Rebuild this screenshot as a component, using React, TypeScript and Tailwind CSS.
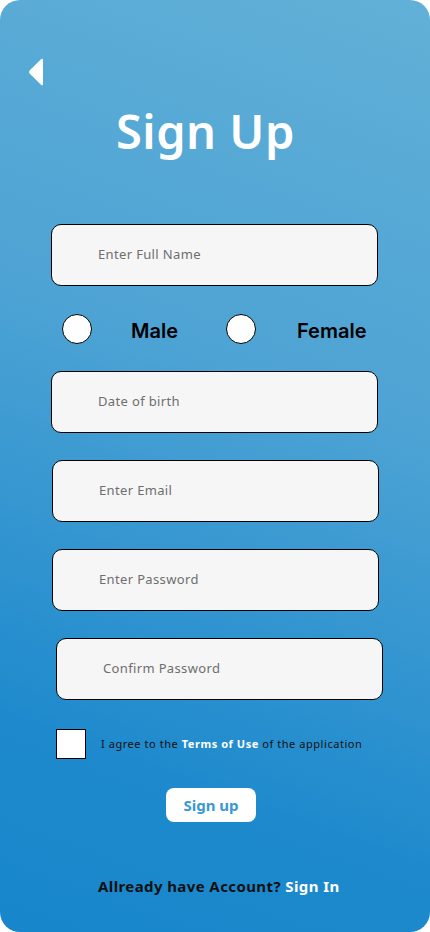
import React from "react"

function Field({ placeholder, className }: { placeholder: string; className: string }) {
    return (
        <div className={`h-[62px] w-[327px] rounded-[10px] border border-black bg-[#f6f6f6] flex items-center ${className}`}>
            <span className="pl-[46px] text-[13px] text-[#6e6e6e] tracking-[0.35px]">{placeholder}</span>
        </div>
    )
}

export default function App() {
    return (
        <div className="w-[430px] h-[932px] bg-white" style={{ fontFamily: "'Noto Sans', sans-serif" }}>
            <div className="relative w-full h-full rounded-[20px] bg-[linear-gradient(200deg,#61b0d7_0%,#4da3d4_40%,#1e8acd_80%,#1886cb_100%)] flex flex-col">
                {/* back */}
                <div className="pl-[28px] pt-[58px]">
                    <svg width="16" height="28" viewBox="0 0 16 28">
                        <path d="M15 2 C15 0.6 14 0.2 13 1.2 L1.6 12.6 C0.8 13.4 0.8 14.6 1.6 15.4 L13 26.8 C14 27.8 15 27.4 15 26 Z" fill="#fff" />
                    </svg>
                </div>

                <h1 className="ml-[116px] mt-[22px] text-[47px] leading-none font-semibold text-white tracking-[0.5px]">
                    Sign Up
                </h1>

                <Field placeholder="Enter Full Name" className="ml-[51px] mt-[69px]" />

                <div className="mt-[28px] flex items-center h-[30px]" style={{ fontFamily: "Inter, sans-serif" }}>
                    <div className="ml-[62px] w-[30px] h-[30px] rounded-full bg-white border border-black" />
                    <span className="ml-[39px] mt-[3px] text-[20px] font-semibold text-black">Male</span>
                    <div className="ml-[48px] w-[30px] h-[30px] rounded-full bg-white border border-black" />
                    <span className="ml-[41px] mt-[3px] text-[20px] font-semibold text-black">Female</span>
                </div>

                <Field placeholder="Date of birth" className="ml-[51px] mt-[27px]" />
                <Field placeholder="Enter Email" className="ml-[52px] mt-[27px]" />
                <Field placeholder="Enter Password" className="ml-[52px] mt-[27px]" />
                <Field placeholder="Confirm Password" className="ml-[56px] mt-[27px]" />

                <div className="mt-[29px] flex items-center">
                    <div className="ml-[56px] w-[30px] h-[30px] bg-white border border-black" />
                    <p className="ml-[15px] text-[11px] text-[#111] tracking-[0.55px]">
                        I agree to the <span className="font-bold text-white">Terms of Use</span> of the application
                    </p>
                </div>

                <button className="ml-[166px] mt-[29px] w-[90px] h-[34px] rounded-lg bg-white text-[15px] font-bold text-[#3a98d3]">
                    Sign up
                </button>

                <p className="mt-[53px] ml-[98px] text-[15px] font-bold text-[#111] tracking-[0.4px]">
                    Allready have Account? <span className="text-white">Sign In</span>
                </p>
            </div>
        </div>
    )
}
